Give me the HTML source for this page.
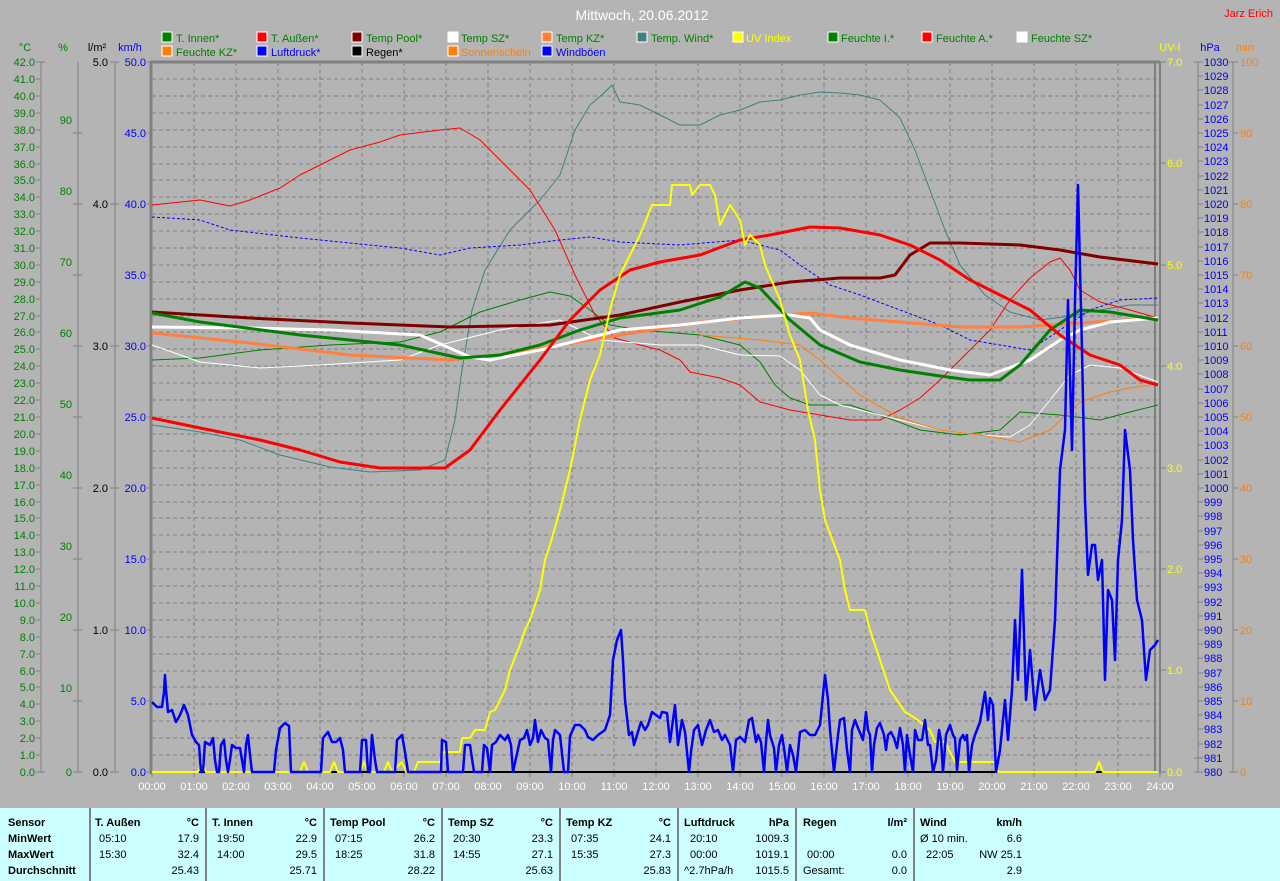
<!DOCTYPE html>
<html><head><meta charset="utf-8"><style>
body{margin:0;width:1280px;height:881px;background:#b4b4b4;overflow:hidden;font-family:"Liberation Sans",sans-serif}
svg{position:absolute;left:0;top:0}
#tbl{position:absolute;left:0;top:808px;width:1280px;height:73px;background:#ccffff;font-size:11px;color:#000}
#tbl div{position:absolute;white-space:nowrap}
.b{font-weight:bold}
.sep{width:2px;height:73px;top:0;background:#808080}
</style></head><body>
<svg width="1280" height="808" font-family="Liberation Sans, sans-serif" font-size="11">
<g stroke="#808080" stroke-dasharray="4,3" stroke-width="1">
<path d="M152 79H1160M152 96H1160M152 113H1160M152 130H1160M152 147H1160M152 164H1160M152 180H1160M152 197H1160M152 214H1160M152 231H1160M152 248H1160M152 265H1160M152 282H1160M152 299H1160M152 316H1160M152 332H1160M152 349H1160M152 366H1160M152 383H1160M152 400H1160M152 417H1160M152 434H1160M152 451H1160M152 468H1160M152 485H1160M152 502H1160M152 518H1160M152 535H1160M152 552H1160M152 569H1160M152 586H1160M152 603H1160M152 620H1160M152 637H1160M152 654H1160M152 671H1160M152 687H1160M152 704H1160M152 721H1160M152 738H1160M152 755H1160"/>
<path d="M194 62V772M236 62V772M278 62V772M320 62V772M362 62V772M404 62V772M446 62V772M488 62V772M530 62V772M572 62V772M614 62V772M656 62V772M698 62V772M740 62V772M782 62V772M824 62V772M866 62V772M908 62V772M950 62V772M992 62V772M1034 62V772M1076 62V772M1118 62V772"/>
</g>
<g stroke="#808080" fill="none">
<path d="M151 62V774M150 62H1160" stroke-width="3"/>
<path d="M1155 62V772M1160 62V772" stroke-width="2"/>
<path d="M41 62V772M78 62V772M115 62V772M147 62H152M1198 62V772M1233 62V772"/>
<path d="M36 62H45M36 79H41M36 96H41M36 113H41M36 130H41M36 147H41M36 164H41M36 180H41M36 197H41M36 214H41M36 231H41M36 248H41M36 265H41M36 282H41M36 299H41M36 316H41M36 332H41M36 349H41M36 366H41M36 383H41M36 400H41M36 417H41M36 434H41M36 451H41M36 468H41M36 485H41M36 502H41M36 518H41M36 535H41M36 552H41M36 569H41M36 586H41M36 603H41M36 620H41M36 637H41M36 654H41M36 671H41M36 687H41M36 704H41M36 721H41M36 738H41M36 755H41M36 772H45"/>
<path d="M73 133H82M73 204H82M73 275H82M73 346H82M73 417H82M73 488H82M73 559H82M73 630H82M73 701H82M73 772H82"/>
<path d="M110 62H119M110 204H119M110 346H119M110 488H119M110 630H119M110 772H119"/>
<path d="M147 133H152M147 204H152M147 275H152M147 346H152M147 417H152M147 488H152M147 559H152M147 630H152M147 701H152M147 772H152"/>
<path d="M1160 62H1166M1160 163H1166M1160 265H1166M1160 366H1166M1160 468H1166M1160 569H1166M1160 670H1166M1160 772H1166"/>
<path d="M1194 62H1203M1198 76H1203M1198 90H1203M1198 105H1203M1198 119H1203M1198 133H1203M1198 147H1203M1198 161H1203M1198 176H1203M1198 190H1203M1198 204H1203M1198 218H1203M1198 232H1203M1198 247H1203M1198 261H1203M1198 275H1203M1198 289H1203M1198 303H1203M1198 318H1203M1198 332H1203M1198 346H1203M1198 360H1203M1198 374H1203M1198 389H1203M1198 403H1203M1198 417H1203M1198 431H1203M1198 445H1203M1198 460H1203M1198 474H1203M1198 488H1203M1198 502H1203M1198 516H1203M1198 531H1203M1198 545H1203M1198 559H1203M1198 573H1203M1198 587H1203M1198 602H1203M1198 616H1203M1198 630H1203M1198 644H1203M1198 658H1203M1198 673H1203M1198 687H1203M1198 701H1203M1198 715H1203M1198 729H1203M1198 744H1203M1194 758H1203M1194 772H1203"/>
<path d="M1229 62H1238M1233 133H1238M1233 204H1238M1233 275H1238M1233 346H1238M1233 417H1238M1233 488H1238M1233 559H1238M1233 630H1238M1233 701H1238M1229 772H1238"/>
<path d="M152 772V777M194 772V777M236 772V777M278 772V777M320 772V777M362 772V777M404 772V777M446 772V777M488 772V777M530 772V777M572 772V777M614 772V777M656 772V777M698 772V777M740 772V777M782 772V777M824 772V777M866 772V777M908 772V777M950 772V777M992 772V777M1034 772V777M1076 772V777M1118 772V777M1160 772V777"/>
</g>
<text x="642" y="20" fill="#fff" font-size="14" text-anchor="middle">Mittwoch, 20.06.2012</text>
<text x="1273" y="17" fill="#ff0000" font-size="11" text-anchor="end">Jarz Erich</text>
<g stroke="#fff" stroke-width="1">
<rect x="162" y="32" width="10" height="10" fill="#008000"/><rect x="257" y="32" width="10" height="10" fill="#ff0000"/><rect x="352" y="32" width="10" height="10" fill="#800000"/><rect x="448" y="32" width="10" height="10" fill="#fff"/><rect x="542" y="32" width="10" height="10" fill="#ff8040"/><rect x="637" y="32" width="10" height="10" fill="#408080"/><rect x="733" y="32" width="10" height="10" fill="#ffff00"/><rect x="828" y="32" width="10" height="10" fill="#008000"/><rect x="922" y="32" width="10" height="10" fill="#ff0000"/><rect x="1017" y="32" width="10" height="10" fill="#fff"/>
<rect x="162" y="46" width="10" height="10" fill="#ff8000"/><rect x="257" y="46" width="10" height="10" fill="#0000ff"/><rect x="352" y="46" width="10" height="10" fill="#000"/><rect x="448" y="46" width="10" height="10" fill="#ff8000"/><rect x="542" y="46" width="10" height="10" fill="#0000ff"/>
</g>
<g fill="#008000">
<text x="176" y="42">T. Innen*</text><text x="271" y="42">T. Außen*</text><text x="366" y="42">Temp Pool*</text><text x="461" y="42">Temp SZ*</text><text x="556" y="42">Temp KZ*</text><text x="651" y="42">Temp. Wind*</text><text x="841" y="42">Feuchte I.*</text><text x="936" y="42">Feuchte A.*</text><text x="1031" y="42">Feuchte SZ*</text><text x="176" y="56">Feuchte KZ*</text>
</g>
<text x="746" y="42" fill="#ffff00">UV Index</text>
<text x="271" y="56" fill="#0000ff">Luftdruck*</text>
<text x="366" y="56" fill="#000">Regen*</text>
<text x="461" y="56" fill="#ff8000">Sonnenschein</text>
<text x="556" y="56" fill="#0000ff">Windböen</text>
<text x="25" y="51" fill="#008000" text-anchor="middle">°C</text>
<text x="63" y="51" fill="#008000" text-anchor="middle">%</text>
<text x="97" y="51" fill="#000" text-anchor="middle">l/m²</text>
<text x="130" y="51" fill="#0000ff" text-anchor="middle">km/h</text>
<text x="1170" y="51" fill="#ffff00" text-anchor="middle">UV-I</text>
<text x="1210" y="51" fill="#0000ff" text-anchor="middle">hPa</text>
<text x="1245" y="51" fill="#ff8000" text-anchor="middle">min</text>
<g fill="#008000" text-anchor="end">
<text x="35" y="66">42.0</text><text x="35" y="83">41.0</text><text x="35" y="100">40.0</text><text x="35" y="117">39.0</text><text x="35" y="134">38.0</text><text x="35" y="151">37.0</text><text x="35" y="168">36.0</text><text x="35" y="184">35.0</text><text x="35" y="201">34.0</text><text x="35" y="218">33.0</text><text x="35" y="235">32.0</text><text x="35" y="252">31.0</text><text x="35" y="269">30.0</text><text x="35" y="286">29.0</text><text x="35" y="303">28.0</text><text x="35" y="320">27.0</text><text x="35" y="336">26.0</text><text x="35" y="353">25.0</text><text x="35" y="370">24.0</text><text x="35" y="387">23.0</text><text x="35" y="404">22.0</text><text x="35" y="421">21.0</text><text x="35" y="438">20.0</text><text x="35" y="455">19.0</text><text x="35" y="472">18.0</text><text x="35" y="489">17.0</text><text x="35" y="506">16.0</text><text x="35" y="522">15.0</text><text x="35" y="539">14.0</text><text x="35" y="556">13.0</text><text x="35" y="573">12.0</text><text x="35" y="590">11.0</text><text x="35" y="607">10.0</text><text x="35" y="624">9.0</text><text x="35" y="641">8.0</text><text x="35" y="658">7.0</text><text x="35" y="675">6.0</text><text x="35" y="691">5.0</text><text x="35" y="708">4.0</text><text x="35" y="725">3.0</text><text x="35" y="742">2.0</text><text x="35" y="759">1.0</text><text x="35" y="776">0.0</text>
<text x="72" y="124">90</text><text x="72" y="195">80</text><text x="72" y="266">70</text><text x="72" y="337">60</text><text x="72" y="408">50</text><text x="72" y="479">40</text><text x="72" y="550">30</text><text x="72" y="621">20</text><text x="72" y="692">10</text><text x="72" y="776">0</text>
</g>
<g fill="#000" text-anchor="end">
<text x="108" y="66">5.0</text><text x="108" y="208">4.0</text><text x="108" y="350">3.0</text><text x="108" y="492">2.0</text><text x="108" y="634">1.0</text><text x="108" y="776">0.0</text>
</g>
<g fill="#0000ff" text-anchor="end">
<text x="146" y="66">50.0</text><text x="146" y="137">45.0</text><text x="146" y="208">40.0</text><text x="146" y="279">35.0</text><text x="146" y="350">30.0</text><text x="146" y="421">25.0</text><text x="146" y="492">20.0</text><text x="146" y="563">15.0</text><text x="146" y="634">10.0</text><text x="146" y="705">5.0</text><text x="146" y="776">0.0</text>
</g>
<g fill="#ffff00">
<text x="1167" y="66">7.0</text><text x="1167" y="167">6.0</text><text x="1167" y="269">5.0</text><text x="1167" y="370">4.0</text><text x="1167" y="472">3.0</text><text x="1167" y="573">2.0</text><text x="1167" y="674">1.0</text><text x="1167" y="776">0.0</text>
</g>
<g fill="#0000ff" font-size="11">
<text x="1204" y="66">1030</text><text x="1204" y="80">1029</text><text x="1204" y="94">1028</text><text x="1204" y="109">1027</text><text x="1204" y="123">1026</text><text x="1204" y="137">1025</text><text x="1204" y="151">1024</text><text x="1204" y="165">1023</text><text x="1204" y="180">1022</text><text x="1204" y="194">1021</text><text x="1204" y="208">1020</text><text x="1204" y="222">1019</text><text x="1204" y="236">1018</text><text x="1204" y="251">1017</text><text x="1204" y="265">1016</text><text x="1204" y="279">1015</text><text x="1204" y="293">1014</text><text x="1204" y="307">1013</text><text x="1204" y="322">1012</text><text x="1204" y="336">1011</text><text x="1204" y="350">1010</text><text x="1204" y="364">1009</text><text x="1204" y="378">1008</text><text x="1204" y="393">1007</text><text x="1204" y="407">1006</text><text x="1204" y="421">1005</text><text x="1204" y="435">1004</text><text x="1204" y="449">1003</text><text x="1204" y="464">1002</text><text x="1204" y="478">1001</text><text x="1204" y="492">1000</text><text x="1204" y="506">999</text><text x="1204" y="520">998</text><text x="1204" y="535">997</text><text x="1204" y="549">996</text><text x="1204" y="563">995</text><text x="1204" y="577">994</text><text x="1204" y="591">993</text><text x="1204" y="606">992</text><text x="1204" y="620">991</text><text x="1204" y="634">990</text><text x="1204" y="648">989</text><text x="1204" y="662">988</text><text x="1204" y="677">987</text><text x="1204" y="691">986</text><text x="1204" y="705">985</text><text x="1204" y="719">984</text><text x="1204" y="733">983</text><text x="1204" y="748">982</text><text x="1204" y="762">981</text><text x="1204" y="776">980</text>
</g>
<g fill="#ff8000">
<text x="1240" y="66">100</text><text x="1240" y="137">90</text><text x="1240" y="208">80</text><text x="1240" y="279">70</text><text x="1240" y="350">60</text><text x="1240" y="421">50</text><text x="1240" y="492">40</text><text x="1240" y="563">30</text><text x="1240" y="634">20</text><text x="1240" y="705">10</text><text x="1240" y="776">0</text>
</g>
<g fill="#fff" text-anchor="middle" font-size="11">
<text x="152" y="790">00:00</text><text x="194" y="790">01:00</text><text x="236" y="790">02:00</text><text x="278" y="790">03:00</text><text x="320" y="790">04:00</text><text x="362" y="790">05:00</text><text x="404" y="790">06:00</text><text x="446" y="790">07:00</text><text x="488" y="790">08:00</text><text x="530" y="790">09:00</text><text x="572" y="790">10:00</text><text x="614" y="790">11:00</text><text x="656" y="790">12:00</text><text x="698" y="790">13:00</text><text x="740" y="790">14:00</text><text x="782" y="790">15:00</text><text x="824" y="790">16:00</text><text x="866" y="790">17:00</text><text x="908" y="790">18:00</text><text x="950" y="790">19:00</text><text x="992" y="790">20:00</text><text x="1034" y="790">21:00</text><text x="1076" y="790">22:00</text><text x="1118" y="790">23:00</text><text x="1160" y="790">24:00</text>
</g>
<g fill="none" stroke-linejoin="round">
<polyline stroke="#408080" stroke-width="1" points="152,425 200,432 240,440 280,455 330,467 370,472 420,470 445,460 455,420 462,370 472,310 485,270 510,230 540,200 560,175 575,130 590,105 605,92 612,85 620,102 640,105 660,115 680,125 700,125 720,115 740,110 760,102 780,100 800,95 820,92 840,93 860,95 880,100 900,118 915,150 930,190 945,230 960,265 985,295 1010,312 1040,320 1070,316 1100,310 1130,305 1158,305"/>
<polyline stroke="#ff0000" stroke-width="1" points="152,205 200,200 230,206 250,200 280,188 300,175 330,160 350,150 380,142 400,135 440,130 460,128 480,140 500,160 530,190 555,230 575,275 595,315 615,338 640,345 660,350 680,360 690,372 720,378 740,385 760,402 790,410 820,415 850,420 880,420 900,410 920,398 940,380 970,350 990,330 1010,300 1030,278 1050,262 1060,258 1070,270 1080,290 1100,302 1130,310 1158,318"/>
<polyline stroke="#008000" stroke-width="1" points="152,360 200,358 260,350 330,345 400,342 440,332 480,312 520,300 550,292 570,296 590,310 610,325 640,330 700,335 740,345 760,362 775,385 790,398 810,405 850,405 880,415 920,430 960,435 1000,430 1020,412 1060,415 1100,420 1130,412 1158,405"/>
<polyline stroke="#ffffff" stroke-width="1" points="152,345 200,362 260,368 320,365 400,360 440,345 500,330 560,320 600,340 660,345 700,345 740,355 780,356 800,370 820,395 840,405 860,410 900,420 940,430 980,435 1010,437 1030,425 1050,400 1070,375 1090,365 1120,368 1158,382"/>
<polyline stroke="#ff8000" stroke-width="1" points="700,335 760,340 800,345 820,360 840,378 860,395 900,418 940,430 980,435 1020,442 1050,430 1080,402 1110,392 1130,388 1158,384"/>
<polyline stroke="#0000ff" stroke-width="1" stroke-dasharray="3,2" points="152,217 200,220 230,230 300,238 400,248 440,255 470,248 520,245 560,240 590,237 620,242 680,245 740,240 780,250 800,265 830,285 860,295 900,310 940,325 970,340 1000,345 1030,350 1060,330 1090,310 1120,300 1158,298"/>
<polyline stroke="#800000" stroke-width="3" points="152,312 250,318 350,323 450,327 550,325 620,315 680,302 740,290 790,282 840,278 880,278 895,275 910,255 930,243 960,243 1020,245 1060,250 1100,257 1158,264"/>
<polyline stroke="#ff8040" stroke-width="3" points="152,333 250,343 350,355 450,360 500,355 560,345 620,335 700,322 760,317 810,313 850,318 900,322 960,327 1020,327 1080,323 1158,318"/>
<polyline stroke="#ffffff" stroke-width="3" points="152,327 250,328 330,330 420,335 470,357 490,360 540,350 580,340 620,330 680,325 740,318 790,315 810,318 820,330 850,345 900,360 950,370 990,375 1030,360 1060,340 1080,330 1110,322 1158,318"/>
<polyline stroke="#008000" stroke-width="3" points="152,313 200,322 300,335 400,345 460,358 500,355 540,345 580,330 620,318 680,310 720,297 745,282 760,288 790,320 820,345 860,362 900,370 940,376 970,380 1000,380 1020,365 1050,330 1080,310 1110,312 1158,320"/>
<polyline stroke="#ff0000" stroke-width="3" points="152,418 200,428 260,440 300,450 340,462 380,468 445,468 470,450 500,410 540,360 570,320 600,290 630,270 660,262 700,255 740,240 770,235 810,227 840,228 880,235 910,245 940,260 970,280 1000,295 1030,310 1060,335 1090,355 1120,365 1140,380 1158,385"/>
<path d="M152 772H1158" stroke="#000" stroke-width="2"/>
<polyline stroke="#ffff00" stroke-width="2" points="152,772 198,772 202,762 206,772 300,772 304,762 308,772 330,772 334,762 338,772 360,772 364,762 368,772 384,772 388,762 392,772 402,762 406,772 414,772 418,762 440,762 443,752 460,752 462,738 470,738 475,730 485,730 490,712 495,710 505,690 510,670 520,645 525,630 530,620 540,590 545,560 550,545 560,510 570,470 580,420 590,380 600,355 610,310 620,275 630,255 640,235 650,210 652,205 670,205 672,185 690,185 692,195 700,185 710,185 715,195 720,225 730,205 740,220 745,245 750,235 760,245 765,265 780,300 790,335 800,360 808,410 815,440 820,490 825,520 840,560 845,590 850,610 865,610 870,630 880,660 890,690 905,712 915,718 930,730 935,742 945,742 955,762 995,762 998,772 1095,772 1099,762 1103,772 1158,772"/>
<polyline stroke="#0000ff" stroke-width="2.5" points="152,702 157,707 162,707 164,692 165,675 166,690 168,712 172,710 176,722 180,715 184,705 188,715 192,735 196,742 199,745 201,772 203,772 205,742 210,745 213,738 215,760 217,772 219,772 221,745 224,740 226,760 228,772 230,760 232,745 236,748 240,748 242,760 244,772 246,745 248,735 250,755 252,772 274,772 276,750 280,728 285,723 289,726 291,772 321,772 323,738 328,732 332,742 336,742 340,738 343,750 345,772 360,772 362,740 366,740 368,772 370,772 372,735 375,760 377,772 395,772 397,740 402,735 405,752 408,772 441,772 442,740 446,742 448,772 463,772 465,745 470,745 474,772 482,772 484,745 487,748 490,772 492,745 496,742 500,735 505,740 508,735 511,745 513,772 520,740 524,738 527,730 530,745 533,738 535,720 538,742 541,730 545,738 548,740 551,772 553,740 555,730 560,735 564,772 568,772 570,736 575,725 580,725 585,730 588,737 593,740 598,735 605,730 610,715 613,660 617,640 621,630 623,660 625,700 629,735 632,732 634,745 637,735 641,722 645,730 648,725 652,712 656,715 660,718 662,712 667,713 670,742 673,720 675,705 678,745 682,720 685,732 689,772 691,752 694,730 698,725 702,745 706,730 710,720 714,732 718,730 722,740 725,735 730,745 733,772 736,740 740,737 745,742 749,720 752,718 756,742 758,735 761,742 764,772 766,742 768,720 770,735 774,748 776,772 779,745 782,735 785,755 787,772 790,745 793,755 796,772 800,732 805,730 810,735 815,735 820,725 825,675 828,700 830,730 834,772 838,735 840,720 844,718 847,750 850,772 852,730 855,720 858,728 861,735 863,740 866,712 868,730 870,735 872,772 874,745 877,728 880,723 884,735 886,750 888,735 891,732 894,738 897,748 900,728 903,745 905,772 907,735 910,755 913,772 915,730 918,740 922,740 925,720 928,745 930,745 933,772 936,760 939,730 941,740 943,772 946,735 950,725 953,735 955,738 957,770 960,740 963,735 965,740 967,735 969,772 972,745 975,735 980,722 985,692 988,720 990,698 993,705 996,772 1000,750 1005,700 1008,740 1012,690 1015,620 1018,680 1022,570 1026,700 1030,650 1035,710 1040,670 1045,700 1050,690 1055,620 1060,470 1065,430 1068,300 1072,450 1075,300 1078,185 1082,350 1085,500 1088,575 1092,545 1095,545 1098,580 1102,560 1105,680 1108,590 1112,600 1115,660 1118,560 1122,520 1125,430 1130,470 1133,540 1137,600 1142,620 1146,680 1150,650 1155,645 1158,640"/>
</g>
</svg>
<div id="tbl">
<div class="sep" style="left:89px"></div><div class="sep" style="left:205px"></div><div class="sep" style="left:323px"></div><div class="sep" style="left:441px"></div><div class="sep" style="left:559px"></div><div class="sep" style="left:677px"></div><div class="sep" style="left:795px"></div><div class="sep" style="left:913px"></div>
<div class="b" style="left:8px;top:9px">Sensor</div><div class="b" style="left:8px;top:25px">MinWert</div><div class="b" style="left:8px;top:41px">MaxWert</div><div class="b" style="left:8px;top:57px">Durchschnitt</div>
<div class="b" style="left:95px;top:9px">T. Außen</div><div class="b" style="right:1081px;top:9px">°C</div>
<div style="left:99px;top:25px">05:10</div><div style="right:1081px;top:25px">17.9</div>
<div style="left:99px;top:41px">15:30</div><div style="right:1081px;top:41px">32.4</div>
<div style="right:1081px;top:57px">25.43</div>
<div class="b" style="left:212px;top:9px">T. Innen</div><div class="b" style="right:963px;top:9px">°C</div>
<div style="left:217px;top:25px">19:50</div><div style="right:963px;top:25px">22.9</div>
<div style="left:217px;top:41px">14:00</div><div style="right:963px;top:41px">29.5</div>
<div style="right:963px;top:57px">25.71</div>
<div class="b" style="left:330px;top:9px">Temp Pool</div><div class="b" style="right:845px;top:9px">°C</div>
<div style="left:335px;top:25px">07:15</div><div style="right:845px;top:25px">26.2</div>
<div style="left:335px;top:41px">18:25</div><div style="right:845px;top:41px">31.8</div>
<div style="right:845px;top:57px">28.22</div>
<div class="b" style="left:448px;top:9px">Temp SZ</div><div class="b" style="right:727px;top:9px">°C</div>
<div style="left:453px;top:25px">20:30</div><div style="right:727px;top:25px">23.3</div>
<div style="left:453px;top:41px">14:55</div><div style="right:727px;top:41px">27.1</div>
<div style="right:727px;top:57px">25.63</div>
<div class="b" style="left:566px;top:9px">Temp KZ</div><div class="b" style="right:609px;top:9px">°C</div>
<div style="left:571px;top:25px">07:35</div><div style="right:609px;top:25px">24.1</div>
<div style="left:571px;top:41px">15:35</div><div style="right:609px;top:41px">27.3</div>
<div style="right:609px;top:57px">25.83</div>
<div class="b" style="left:684px;top:9px">Luftdruck</div><div class="b" style="right:491px;top:9px">hPa</div>
<div style="left:690px;top:25px">20:10</div><div style="right:491px;top:25px">1009.3</div>
<div style="left:690px;top:41px">00:00</div><div style="right:491px;top:41px">1019.1</div>
<div style="left:684px;top:57px">^2.7hPa/h</div><div style="right:491px;top:57px">1015.5</div>
<div class="b" style="left:803px;top:9px">Regen</div><div class="b" style="right:373px;top:9px">l/m²</div>
<div style="left:807px;top:41px">00:00</div><div style="right:373px;top:41px">0.0</div>
<div style="left:803px;top:57px">Gesamt:</div><div style="right:373px;top:57px">0.0</div>
<div class="b" style="left:920px;top:9px">Wind</div><div class="b" style="right:258px;top:9px">km/h</div>
<div style="left:920px;top:25px">Ø 10 min.</div><div style="right:258px;top:25px">6.6</div>
<div style="left:926px;top:41px">22:05</div><div style="right:258px;top:41px">NW 25.1</div>
<div style="right:258px;top:57px">2.9</div>
</div>
</body></html>
